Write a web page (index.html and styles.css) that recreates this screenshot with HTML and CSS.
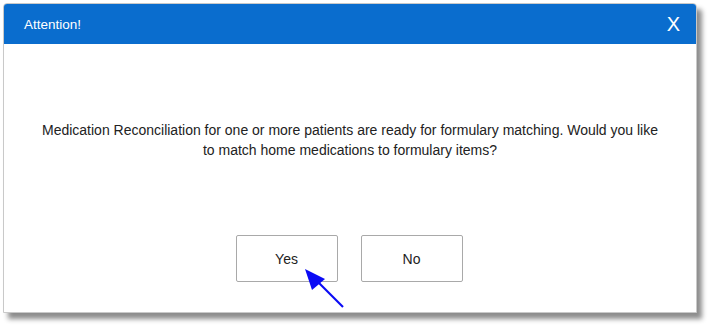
FILE: index.html
```html
<!DOCTYPE html>
<html lang="en">
<head>
  <meta charset="UTF-8" />
  <title>Attention!</title>
  <link rel="stylesheet" href="styles.css">
</head>
<body>

  <div class="dialog" role="dialog" aria-label="Attention!">
    <div class="dialog-header">
      <span class="dialog-title">Attention!</span>
      <span class="dialog-close">X</span>
    </div>
    <div class="dialog-body">
      <p class="message">Medication Reconciliation for one or more patients are ready for formulary matching. Would you like to match home medications to formulary items?</p>
      <div class="actions">
        <button class="btn">Yes</button>
        <button class="btn">No</button>
      </div>
    </div>
  </div>

  <!-- callout arrow pointing at Yes -->
  <svg class="pointer" width="60" height="50" viewBox="0 0 60 50">
    <line x1="45" y1="45" x2="14" y2="14" stroke="#0a0af5" stroke-width="2.2" />
    <polygon points="7,7 27,17 14,28" fill="#0a0af5" />
  </svg>

</body>
</html>
```

FILE: styles.css
```css
* { margin: 0; padding: 0; box-sizing: border-box; }
html, body {
  width: 100%; height: 100%;
  background: #fff;
  font-family: 'Liberation Sans', Arial, sans-serif;
  overflow: hidden;
}
.dialog {
  position: relative;
  margin: 3px 0 0 3px;
  width: 694px;
  height: 310px;
  background: #fff;
  border: 1px solid #c9c9c9;
  border-radius: 4px 4px 0 0;
  box-shadow: 5px 6px 5px rgba(0,0,0,0.45);
  display: flex;
  flex-direction: column;
}
.dialog-header {
  height: 40px;
  background: #0a6dce;
  color: #fff;
  display: flex;
  align-items: center;
  justify-content: space-between;
  padding: 0 16px 0 20px;
  border-radius: 3px 3px 0 0;
}
.dialog-title {
  font-size: 13.5px;
  padding-top: 1px;
}
.dialog-close {
  font-size: 20px;
  padding-top: 1px;
}
.dialog-body {
  flex: 1;
  display: flex;
  flex-direction: column;
  align-items: center;
  padding-top: 76px;
}
.message {
  width: 630px;
  font-size: 14px;
  line-height: 20px;
  text-align: center;
  color: #222;
}
.actions {
  display: flex;
  gap: 23px;
  margin-top: 75px;
  margin-left: -2px;
}
.btn {
  width: 102px;
  height: 47px;
  background: #fff;
  border: 1px solid #a9a9a9;
  border-radius: 2px;
  font-family: 'Liberation Sans', Arial, sans-serif;
  font-size: 14px;
  color: #222;
}
.pointer {
  position: absolute;
  left: 298px;
  top: 262px;
}
```
